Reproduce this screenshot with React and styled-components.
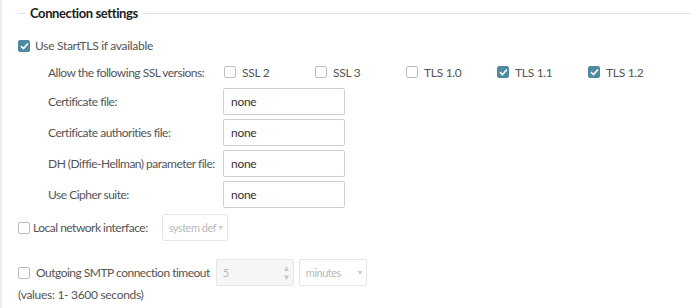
import React from 'react'
import styled, { createGlobalStyle } from 'styled-components'

const Global = createGlobalStyle`
  body {
    margin: 0;
    background: #fff;
    font-family: Lato, "Liberation Sans", sans-serif;
    font-size: 12px;
    letter-spacing: -0.3px;
    color: #555;
  }
`

const Panel = styled.div`
  width: 691px;
  height: 308px;
  box-sizing: border-box;
  border-left: 2px solid #e9eef2;
  padding-left: 16px;
`

const Legend = styled.div`
  display: flex;
  align-items: center;
  height: 26px;
`

const Line = styled.div`
  height: 1px;
  background: #e4e4e4;
  width: ${p => (p.$short ? '8px' : 'auto')};
  flex: ${p => (p.$short ? 'none' : '1')};
`

const LegendText = styled.div`
  font-size: 13px;
  font-weight: 700;
  letter-spacing: -0.4px;
  color: #1c1c1c;
  padding: 0 4px;
`

const Row = styled.div`
  display: flex;
  align-items: center;
  height: ${p => p.$h || 27}px;
  margin-top: ${p => p.$mt || 0}px;
  padding-left: ${p => p.$indent || 0}px;
`

const Label = styled.div`
  width: ${p => p.$w}px;
  flex: none;
  white-space: nowrap;
  letter-spacing: -0.5px;
`

const Box = styled.span`
  width: 12px;
  height: 12px;
  box-sizing: border-box;
  border-radius: 2px;
  border: 1px solid ${p => (p.$on ? '#4f8aa3' : '#bdbdbd')};
  background: ${p => (p.$on ? '#4f8aa3' : '#fff')};
  display: inline-flex;
  align-items: center;
  justify-content: center;
  flex: none;
  margin-right: ${p => p.$gap || 5}px;
`

const Check = styled.label`
  display: flex;
  align-items: center;
  width: ${p => p.$w || 'auto'};
  white-space: nowrap;
  letter-spacing: ${p => (p.$tight ? '-0.5px' : 'inherit')};
`

const Versions = styled.div`
  display: flex;
`

const TextInput = styled.div`
  width: 122px;
  height: 27px;
  box-sizing: border-box;
  border: 1px solid #cfcfcf;
  border-radius: 2px;
  padding: 0 7px;
  display: flex;
  align-items: center;
  color: #333;
`

const Select = styled.div`
  width: ${p => p.$w}px;
  height: 27px;
  flex: none;
  box-sizing: border-box;
  border: 1px solid #e6e6e6;
  border-radius: 2px;
  padding: 0 3px 0 6px;
  display: flex;
  align-items: center;
  font-size: 11px;
  letter-spacing: -0.5px;
  color: #b9b9b9;
  background: ${p => (p.$bg ? '#f6f6f6' : '#fff')};
  margin-left: ${p => p.$ml || 0}px;
  white-space: nowrap;
`

const SelText = styled.span`
  flex: 1;
  min-width: 0;
`

const Arrow = styled.span`
  flex: none;
  font-size: ${p => p.$size || 7}px;
  line-height: ${p => p.$size || 7}px;
  color: #c8c8c8;
  margin-left: 1px;
`

const Spin = styled.span`
  display: flex;
  flex-direction: column;
  gap: 1px;
`

const Note = styled.div`
  margin-top: 1px;
  line-height: 16px;
`

const Tick = () => (
  <svg width="9" height="8" viewBox="0 0 9 8">
    <path d="M1 4.2 L3.5 6.5 L8 1.5" fill="none" stroke="#fff" strokeWidth="1.6" />
  </svg>
)

const Checkbox = ({ on, gap }) => <Box $on={on} $gap={gap}>{on && <Tick />}</Box>

const versions = [
  ['SSL 2', false],
  ['SSL 3', false],
  ['TLS 1.0', false],
  ['TLS 1.1', true],
  ['TLS 1.2', true],
]

const files = [
  'Certificate file:',
  'Certificate authorities file:',
  'DH (Diffie-Hellman) parameter file:',
  'Use Cipher suite:',
]

export default function App() {
  return (
    <>
      <Global />
      <Panel>
        <Legend>
          <Line $short />
          <LegendText>Connection settings</LegendText>
          <Line />
        </Legend>
        <Row $mt={6}>
          <Check><Checkbox on />Use StartTLS if available</Check>
        </Row>
        <Row $indent={30} $h={26}>
          <Label $w={176}>Allow the following SSL versions:</Label>
          <Versions>
            {versions.map(([v, on]) => (
              <Check key={v} $w="91px"><Checkbox on={on} gap={6} />{v}</Check>
            ))}
          </Versions>
        </Row>
        {files.map((f, i) => (
          <Row key={f} $indent={30} $mt={i === 0 ? 3 : 4}>
            <Label $w={175}>{f}</Label>
            <TextInput>none</TextInput>
          </Row>
        ))}
        <Row $mt={6}>
          <Check $tight><Checkbox gap={3} />Local network interface:</Check>
          <Select $w={66} $ml={14}><SelText>system def</SelText><Arrow>▼</Arrow></Select>
        </Row>
        <Row $mt={18}>
          <Check $tight><Checkbox gap={6} />Outgoing SMTP connection timeout</Check>
          <Select $w={78} $ml={6} $bg><SelText>5</SelText>
            <Spin><Arrow $size={8}>▲</Arrow><Arrow $size={8}>▼</Arrow></Spin>
          </Select>
          <Select $w={68} $ml={5}><SelText>minutes</SelText><Arrow>▼</Arrow></Select>
        </Row>
        <Note>(values: 1- 3600 seconds)</Note>
      </Panel>
    </>
  )
}
